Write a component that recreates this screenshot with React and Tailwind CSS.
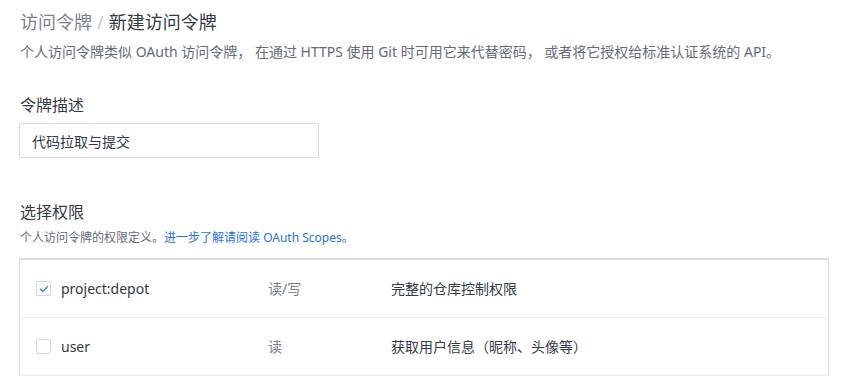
const FONT = "font-['Noto_Sans','Noto_Sans_CJK_SC',sans-serif]";

const scopes = [
  { name: "project:depot", access: "读/写", desc: "完整的仓库控制权限", checked: true },
  { name: "user", access: "读", desc: "获取用户信息（昵称、头像等）", checked: false },
];

function Checkbox({ checked }) {
  return (
    <span className="flex h-[15px] w-[15px] items-center justify-center rounded-[2px] border border-[#d3d7de] bg-white">
      {checked && (
        <svg width="10" height="10" viewBox="0 0 10 10" fill="none">
          <path d="M1.5 5.2 L4 7.6 L8.6 2.4" stroke="#3a7bf2" strokeWidth="1.3" strokeLinecap="round" strokeLinejoin="round" />
        </svg>
      )}
    </span>
  );
}

export default function App() {
  return (
    <div className={`${FONT} min-h-[376px] w-[857px] bg-white pl-[19px] pr-[28px] text-[#323a45]`}>
      <h1 className="pt-[10px] pl-px text-[18px] font-normal leading-[24px]">
        <span className="text-[#7a8190]">访问令牌</span>
        <span className="mx-[5px] text-[#c3c8d0]">/</span>
        <span className="text-[#323a45]">新建访问令牌</span>
      </h1>
      <p className="mt-[8px] pl-px text-[14px] leading-[20px] text-[#646b78]">
        个人访问令牌类似 OAuth 访问令牌， 在通过 HTTPS 使用 Git 时可用它来代替密码， 或者将它授权给标准认证系统的 API。
      </p>

      <h2 className="mt-[32px] pl-px text-[16px] leading-[22px]">令牌描述</h2>
      <input
        defaultValue="代码拉取与提交"
        className={`${FONT} mt-[7px] h-[35px] w-[300px] rounded-[2px] border border-[#dadee4] px-[12px] text-[14px] text-[#323a45] outline-none`}
      />

      <h2 className="mt-[43px] pl-px text-[16px] leading-[22px]">选择权限</h2>
      <p className="mt-[6px] pl-px text-[12px] leading-[18px] text-[#646b78]">
        个人访问令牌的权限定义。
        <span className="text-[#2b6fe8]">进一步了解请阅读 OAuth Scopes。</span>
      </p>

      <div className="mt-[11px] border border-t-2 border-b-0 border-[#dadee4]">
        {scopes.map((s) => (
          <div key={s.name} className="flex h-[58px] items-center border-b border-[#eceef2] text-[14px]">
            <div className="flex w-[248px] items-center gap-[10px] pl-[16px]">
              <Checkbox checked={s.checked} />
              <span className="text-[#323a45]">{s.name}</span>
            </div>
            <div className="w-[123px] text-[#7a8190]">{s.access}</div>
            <div className="text-[#323a45]">{s.desc}</div>
          </div>
        ))}
      </div>
    </div>
  );
}
